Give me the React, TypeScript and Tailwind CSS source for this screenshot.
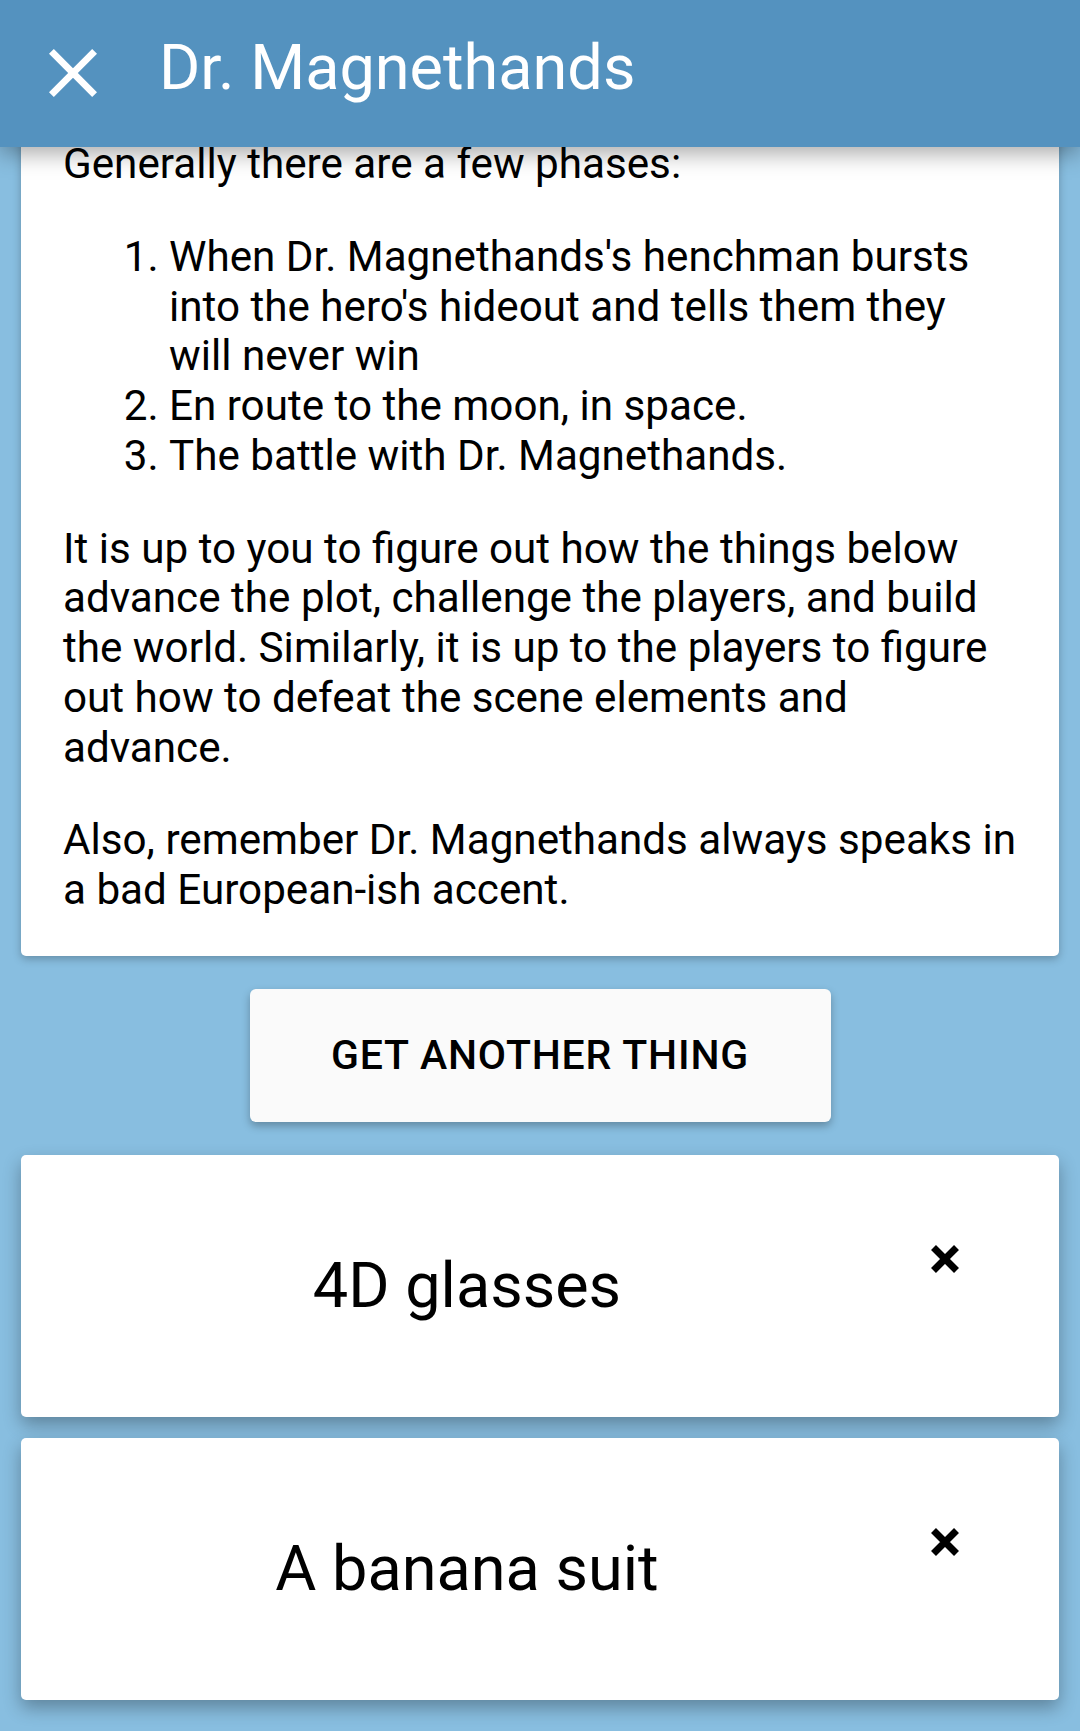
import React from 'react';

const things = ['4D glasses', 'A banana suit'];

const CloseIcon: React.FC = () => (
  <svg width="48" height="48" viewBox="5 5 14 14" fill="#ffffff">
    <path d="M19 6.41L17.59 5 12 10.59 6.41 5 5 6.41 10.59 12 5 17.59 6.41 19 12 13.41 17.59 19 19 17.59 13.41 12z" />
  </svg>
);

const RemoveIcon: React.FC = () => (
  <svg width="28" height="28" viewBox="0 0 28 28">
    <path d="M2.5 2.5L25.5 25.5M25.5 2.5L2.5 25.5" stroke="#000" strokeWidth="7" />
  </svg>
);

const ThingCard: React.FC<{ name: string }> = ({ name }) => (
  <div className="flex h-[262px] rounded-[5px] bg-white shadow-[0_8px_18px_rgba(0,0,0,0.3)]">
    <div className="flex flex-1 items-center justify-center text-[63px] text-black">{name}</div>
    <div className="w-[146px] pl-[18px] pt-[90px]">
      <RemoveIcon />
    </div>
  </div>
);

export default function App() {
  return (
    <div className="h-[1731px] overflow-hidden bg-[#88bee0] font-['Roboto',sans-serif]">
      <header className="relative z-10 flex h-[147px] items-center bg-[#5492bf] shadow-[0_6px_22px_rgba(0,0,0,0.35)]">
        <div className="pl-[49px] pb-[2px]">
          <CloseIcon />
        </div>
        <h1 className="ml-[62px] pb-[10px] text-[63px] text-white">Dr. Magnethands</h1>
      </header>

      <main className="-mt-[53px] px-[21px]">
        <div className="rounded-[5px] bg-white pb-[41px] pl-[42px] pr-[40px] pt-[45px] text-[42.2px] leading-[49.75px] text-black shadow-[0_3px_8px_rgba(0,0,0,0.25)]">
          <p>Generally there are a few phases:</p>
          <ol className="my-[43px] list-decimal pl-[106px] pr-[5px]">
            <li>
              When Dr. Magnethands's henchman bursts into the hero's hideout and tells them they will never
              win
            </li>
            <li>En route to the moon, in space.</li>
            <li>The battle with Dr. Magnethands.</li>
          </ol>
          <p>
            It is up to you to figure out how the things below advance the plot, challenge the players, and
            build the world. Similarly, it is up to the players to figure out how to defeat the scene elements
            and advance.
          </p>
          <p className="mt-[43px]">
            Also, remember Dr. Magnethands always speaks in a bad European-ish accent.
          </p>
        </div>

        <div className="flex justify-center py-[33px]">
          <button className="h-[133px] w-[581px] rounded-[6px] bg-[#fafafa] text-[41px] font-medium tracking-[0.02em] text-black shadow-[0_4px_8px_rgba(0,0,0,0.28)]">
            GET ANOTHER THING
          </button>
        </div>

        <div className="flex flex-col gap-[21px]">
          {things.map((t) => (
            <ThingCard key={t} name={t} />
          ))}
        </div>
      </main>
    </div>
  );
}
